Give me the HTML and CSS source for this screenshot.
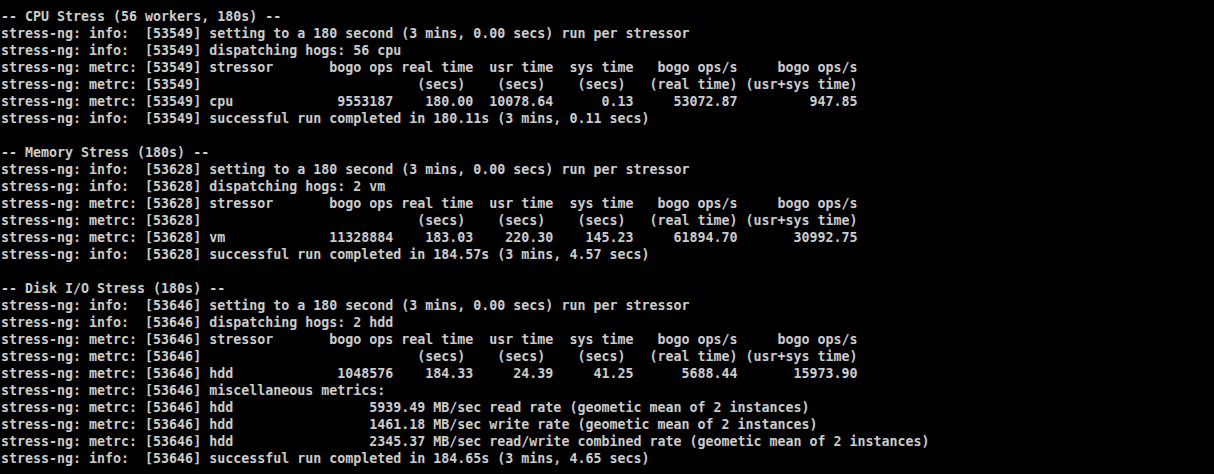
FILE: index.html
```html
<!DOCTYPE html>
<html>
<head>
<meta charset="utf-8">
<link rel="stylesheet" href="styles.css">
</head>
<body>
<pre class="term">-- CPU Stress (56 workers, 180s) --
stress-ng: info:  [53549] setting to a 180 second (3 mins, 0.00 secs) run per stressor
stress-ng: info:  [53549] dispatching hogs: 56 cpu
stress-ng: metrc: [53549] stressor       bogo ops real time  usr time  sys time   bogo ops/s     bogo ops/s
stress-ng: metrc: [53549]                           (secs)    (secs)    (secs)   (real time) (usr+sys time)
stress-ng: metrc: [53549] cpu             9553187    180.00  10078.64      0.13     53072.87         947.85
stress-ng: info:  [53549] successful run completed in 180.11s (3 mins, 0.11 secs)

-- Memory Stress (180s) --
stress-ng: info:  [53628] setting to a 180 second (3 mins, 0.00 secs) run per stressor
stress-ng: info:  [53628] dispatching hogs: 2 vm
stress-ng: metrc: [53628] stressor       bogo ops real time  usr time  sys time   bogo ops/s     bogo ops/s
stress-ng: metrc: [53628]                           (secs)    (secs)    (secs)   (real time) (usr+sys time)
stress-ng: metrc: [53628] vm             11328884    183.03    220.30    145.23     61894.70       30992.75
stress-ng: info:  [53628] successful run completed in 184.57s (3 mins, 4.57 secs)

-- Disk I/O Stress (180s) --
stress-ng: info:  [53646] setting to a 180 second (3 mins, 0.00 secs) run per stressor
stress-ng: info:  [53646] dispatching hogs: 2 hdd
stress-ng: metrc: [53646] stressor       bogo ops real time  usr time  sys time   bogo ops/s     bogo ops/s
stress-ng: metrc: [53646]                           (secs)    (secs)    (secs)   (real time) (usr+sys time)
stress-ng: metrc: [53646] hdd             1048576    184.33     24.39     41.25      5688.44       15973.90
stress-ng: metrc: [53646] miscellaneous metrics:
stress-ng: metrc: [53646] hdd                 5939.49 MB/sec read rate (geometic mean of 2 instances)
stress-ng: metrc: [53646] hdd                 1461.18 MB/sec write rate (geometic mean of 2 instances)
stress-ng: metrc: [53646] hdd                 2345.37 MB/sec read/write combined rate (geometic mean of 2 instances)
stress-ng: info:  [53646] successful run completed in 184.65s (3 mins, 4.65 secs)</pre>
</body>
</html>
```

FILE: styles.css
```css
html, body {
  margin: 0;
  padding: 0;
  background: #000000;
}

body {
  width: 1214px;
  height: 474px;
  overflow: hidden;
}

.term {
  margin: 0;
  padding: 8px 0 0 1px;
  font-family: "DejaVu Sans Mono", "Liberation Mono", monospace;
  font-size: 13.31px;
  line-height: 17px;
  font-weight: bold;
  color: #cccccc;
  white-space: pre;
}
```
